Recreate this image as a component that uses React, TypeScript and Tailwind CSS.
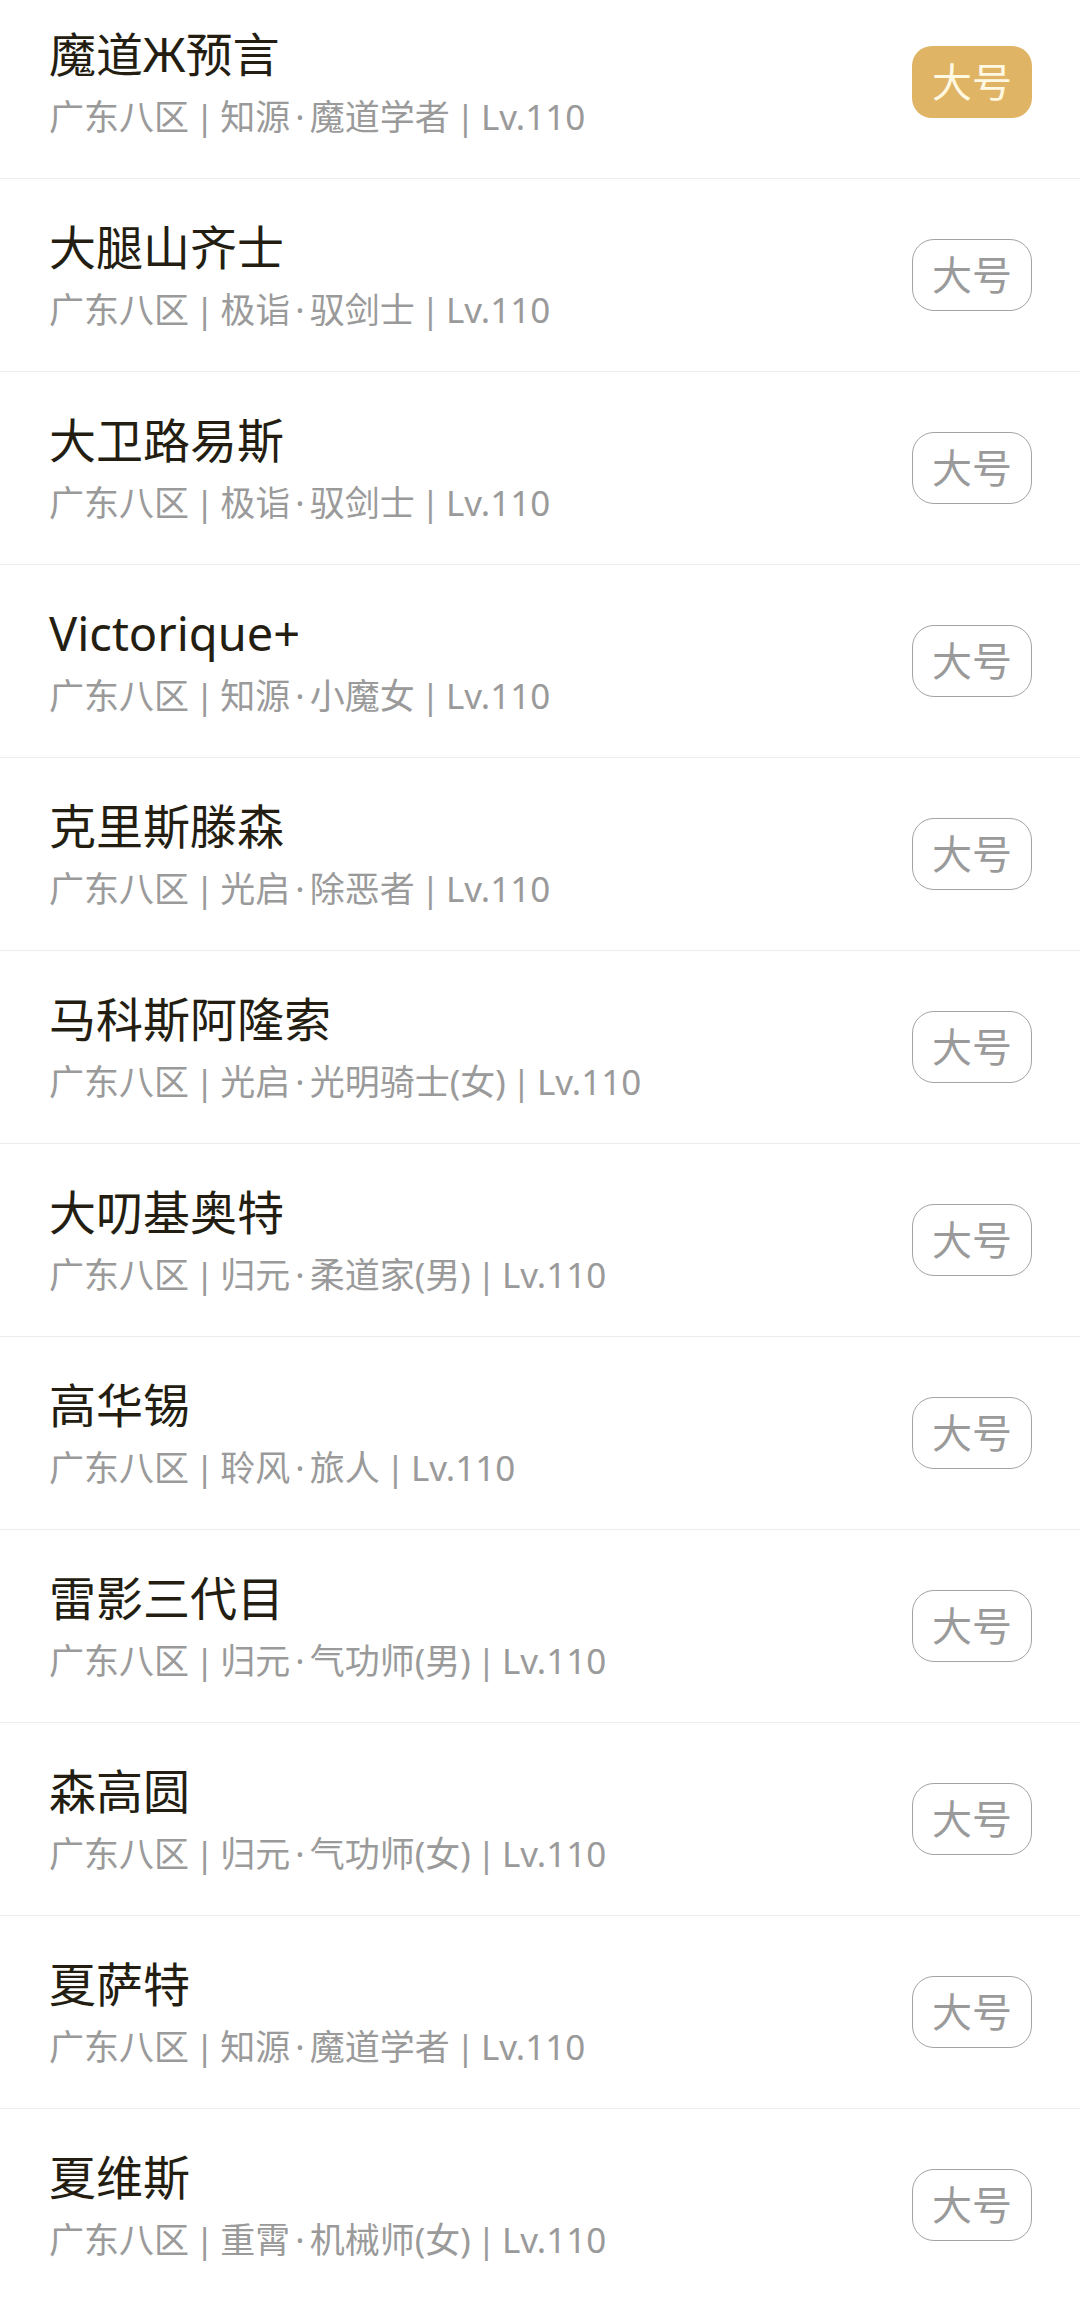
const roles = [
  { name: "魔道Ж预言", school: "知源", job: "魔道学者", main: true },
  { name: "大腿山齐士", school: "极诣", job: "驭剑士" },
  { name: "大卫路易斯", school: "极诣", job: "驭剑士" },
  { name: "Victorique+", school: "知源", job: "小魔女" },
  { name: "克里斯滕森", school: "光启", job: "除恶者" },
  { name: "马科斯阿隆索", school: "光启", job: "光明骑士(女)" },
  { name: "大叨基奥特", school: "归元", job: "柔道家(男)" },
  { name: "高华锡", school: "聆风", job: "旅人" },
  { name: "雷影三代目", school: "归元", job: "气功师(男)" },
  { name: "森高圆", school: "归元", job: "气功师(女)" },
  { name: "夏萨特", school: "知源", job: "魔道学者" },
  { name: "夏维斯", school: "重霄", job: "机械师(女)" },
];

function Pipe() {
  return <span className="mx-[6px]">|</span>;
}

function RoleRow({ name, school, job, main }: { name: string; school: string; job: string; main?: boolean }) {
  return (
    <div className="flex h-[193px] items-center justify-between border-b border-[#ececec] pl-[49px] pr-[48px]">
      <div className="flex flex-col gap-[13px]">
        <div className="text-[47px] leading-[56px] text-[#241e12]">{name}</div>
        <div className="text-[35px] leading-[44px] text-[#9a9a9a]">
          广东八区
          <Pipe />
          {school}
          <span className="mx-[5px]">·</span>
          {job}
          <Pipe />
          Lv.110
        </div>
      </div>
      {main ? (
        <div className="flex h-[72px] w-[120px] items-center justify-center rounded-[20px] bg-[#dfb565] text-[40px] leading-none text-[#fff8e2]">
          大号
        </div>
      ) : (
        <div className="flex h-[72px] w-[120px] items-center justify-center rounded-[22px] border-[1.5px] border-[#a3a3a3] text-[40px] leading-none text-[#9a9a9a]">
          大号
        </div>
      )}
    </div>
  );
}

export default function App() {
  return (
    <div
      className="h-[2298px] w-[1080px] overflow-hidden bg-white"
      style={{ fontFamily: '"Noto Sans", "Noto Sans CJK SC", sans-serif' }}
    >
      <div className="-mt-[14px]">
        {roles.map((r) => (
          <RoleRow key={r.name} name={r.name} school={r.school} job={r.job} main={r.main} />
        ))}
      </div>
    </div>
  );
}
